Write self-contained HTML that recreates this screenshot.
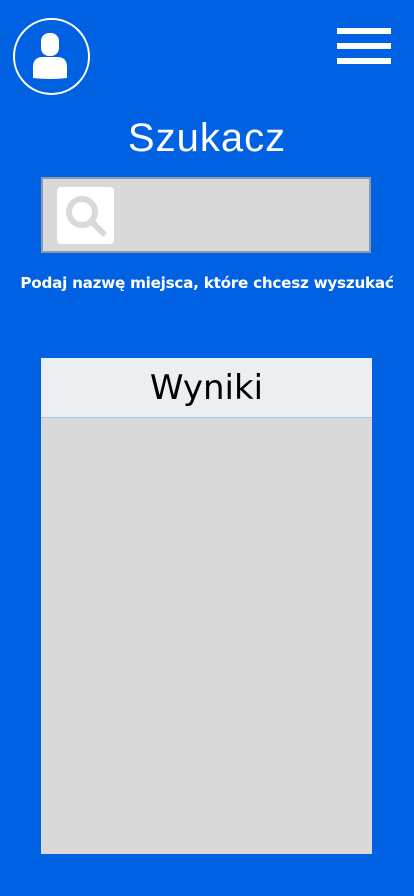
<!DOCTYPE html>
<html><head><meta charset="utf-8"><style>
html,body{margin:0;padding:0}
body{width:414px;height:896px;background:#0061e3;position:relative;overflow:hidden;font-family:"Liberation Sans",sans-serif}
.ab{position:absolute}
.bar{position:absolute;left:337px;width:54px;height:6px;background:#fff}
</style></head><body>
<div class="ab" style="left:13px;top:18px;width:73px;height:73px;border:2px solid #fff;border-radius:50%"></div>
<svg class="ab" style="left:30px;top:32px" width="40" height="48" viewBox="0 0 40 48">
<rect x="11" y="1" width="18" height="23" rx="8" fill="#fff"/>
<path d="M3 46 L3 35 Q3 25 13 25 L27 25 Q37 25 37 35 L37 46 Q20 48 3 46Z" fill="#fff"/>
</svg>
<div class="bar" style="top:28px"></div>
<div class="bar" style="top:43px"></div>
<div class="bar" style="top:58px"></div>
<div class="ab" style="left:0;width:414px;top:116px;text-align:center;color:#fff;font-size:40px;letter-spacing:1px">Szukacz</div>
<div class="ab" style="left:41px;top:177px;width:326px;height:72px;background:#d9d9d9;border:2px solid #8a9bb0"></div>
<div class="ab" style="left:57px;top:187px;width:57px;height:57px;background:#fff;border-radius:4px"></div>
<svg class="ab" style="left:57px;top:187px" width="57" height="57" viewBox="0 0 57 57">
<circle cx="25" cy="25" r="13" fill="none" stroke="#d9d9d9" stroke-width="6"/>
<line x1="34" y1="34" x2="48" y2="48" stroke="#d9d9d9" stroke-width="6"/>
</svg>
<div class="ab" style="left:0;width:414px;top:274px;text-align:center;color:#fff;font-size:15.2px;font-weight:bold;font-family:'DejaVu Sans',sans-serif;letter-spacing:-0.25px">Podaj nazwę miejsca, które chcesz wyszukać</div>
<div class="ab" style="left:41px;top:358px;width:331px;height:496px;background:#d9d9d9"></div>
<div class="ab" style="left:41px;top:358px;width:331px;height:59px;background:#eceff2;border-bottom:1px solid #a9c3e0;text-align:center;font-size:34px;line-height:60px;color:#000;font-family:'DejaVu Sans',sans-serif">Wyniki</div>
</body></html>
